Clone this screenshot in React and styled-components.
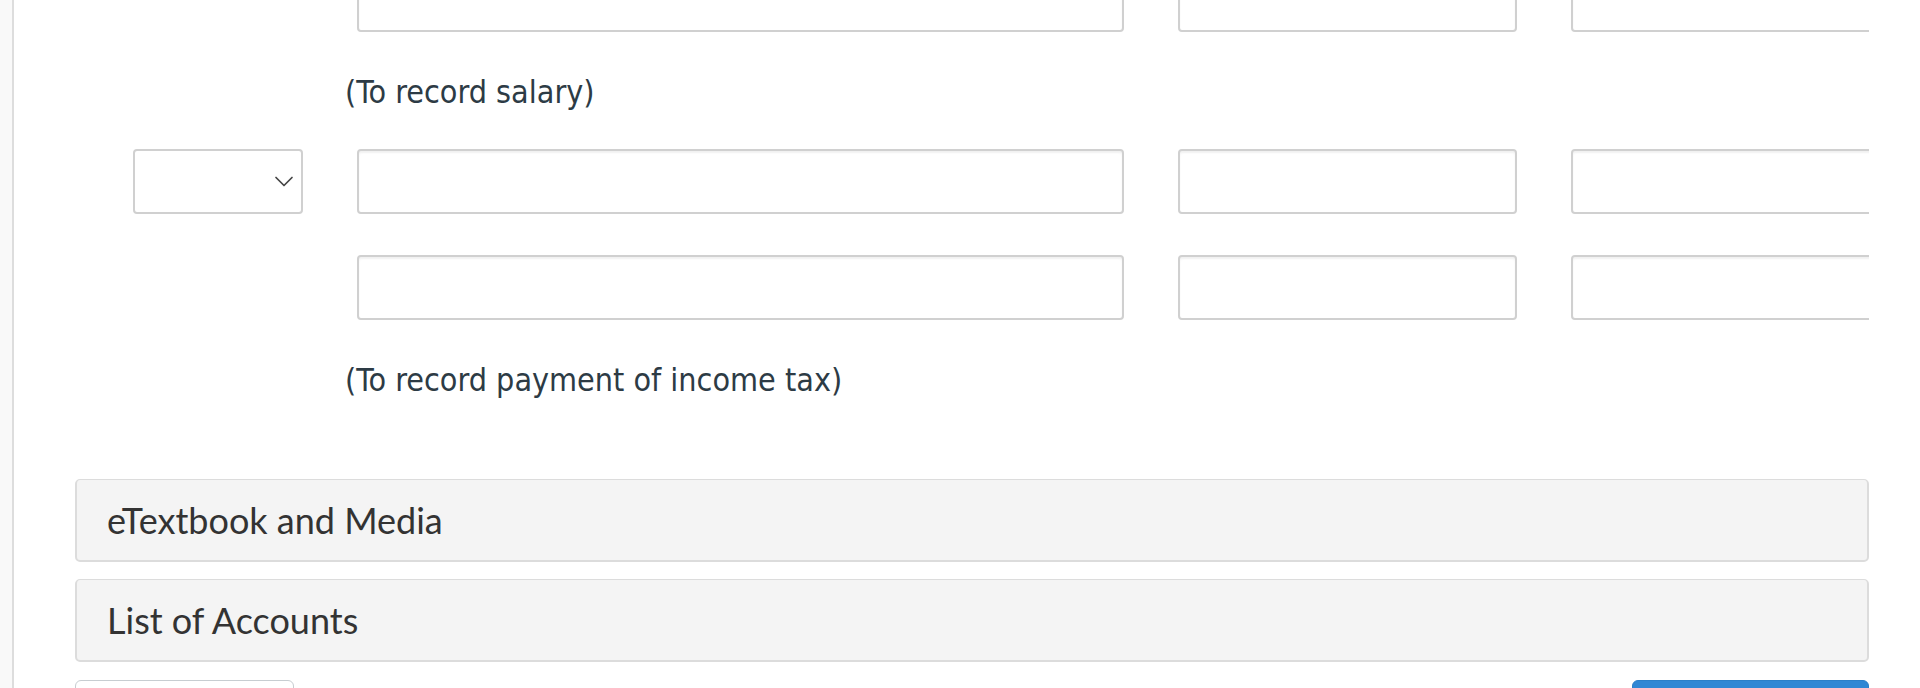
import React from "react";
import styled, { createGlobalStyle } from "styled-components";

const GlobalStyle = createGlobalStyle`
  html, body {
    margin: 0;
    padding: 0;
    background: #ffffff;
  }
  * {
    box-sizing: border-box;
  }
`;

const Page = styled.div`
  display: flex;
  width: 1920px;
  height: 688px;
  overflow: hidden;
  background: #ffffff;
`;

const SideStrip = styled.div`
  flex-shrink: 0;
  width: 14px;
  background: #f9f9f9;
  border-right: 2px solid #dddddd;
`;

const Main = styled.main`
  flex: 1;
  min-width: 0;
  padding: 0 51px 0 61px;
`;

const Question = styled.div`
  margin-top: -33px;
  overflow: hidden;
`;

const EntryRow = styled.div`
  display: grid;
  grid-template-columns: 170px 767px 339px 339px;
  column-gap: 54px;
  padding-left: 58px;
  margin-top: ${(p) => p.$top || 0}px;
`;

const Field = styled.div`
  height: 65px;
  background: #ffffff;
  border: 2px solid #d0d0d0;
  border-radius: 4px;
  box-shadow: inset 0 2px 2px rgba(0, 0, 0, 0.06);
`;

const Select = styled(Field)`
  display: flex;
  align-items: center;
  justify-content: flex-end;
  padding-right: 7px;
  box-shadow: none;
  color: #444444;
`;

const Spacer = styled.div``;

const Note = styled.p`
  margin: 40px 0 0 270px;
  height: 40px;
  line-height: 40px;
  font-family: "DejaVu Sans Condensed", "DejaVu Sans", sans-serif;
  font-stretch: condensed;
  font-size: 32px;
  color: #2d3b45;
  white-space: nowrap;
`;

const Panels = styled.div`
  display: flex;
  flex-direction: column;
  gap: 17px;
  margin-top: 79px;
`;

const Panel = styled.div`
  display: flex;
  align-items: center;
  height: 83px;
  padding: 0 30px;
  background: #f4f4f4;
  border: 2px solid #dcdcdc;
  border-top-width: 1px;
  border-radius: 5px;
  font-family: Lato, "Liberation Sans", sans-serif;
  font-size: 36px;
  color: #333333;
`;

const Actions = styled.div`
  display: flex;
  justify-content: space-between;
  margin-top: 18px;
`;

const Button = styled.button`
  width: ${(p) => p.$w}px;
  height: 50px;
  border-radius: 6px;
  border: 1px solid ${(p) => (p.$primary ? "#2b7fc8" : "#c7cdd1")};
  background: ${(p) => (p.$primary ? "#3087d4" : "#ffffff")};
  font-family: Lato, "Liberation Sans", sans-serif;
  font-size: 24px;
  color: ${(p) => (p.$primary ? "#ffffff" : "#2d3b45")};
`;

function Chevron() {
  return (
    <svg width="20" height="13" viewBox="0 0 20 13" fill="none">
      <polyline
        points="2,2.5 10,10.5 18,2.5"
        stroke="#444"
        strokeWidth="1.7"
        strokeLinecap="round"
        strokeLinejoin="round"
      />
    </svg>
  );
}

function Entry({ withSelect, top }) {
  return (
    <EntryRow $top={top}>
      {withSelect ? (
        <Select>
          <Chevron />
        </Select>
      ) : (
        <Spacer />
      )}
      <Field />
      <Field />
      <Field />
    </EntryRow>
  );
}

export default function App() {
  return (
    <>
      <GlobalStyle />
      <Page>
        <SideStrip />
        <Main>
          <Question>
            <Entry />
            <Note>(To record salary)</Note>
            <Entry withSelect top={37} />
            <Entry top={41} />
            <Note>(To record payment of income tax)</Note>
          </Question>
          <Panels>
            <Panel>eTextbook and Media</Panel>
            <Panel>List of Accounts</Panel>
          </Panels>
          <Actions>
            <Button $w={219} />
            <Button $w={237} $primary />
          </Actions>
        </Main>
      </Page>
    </>
  );
}
